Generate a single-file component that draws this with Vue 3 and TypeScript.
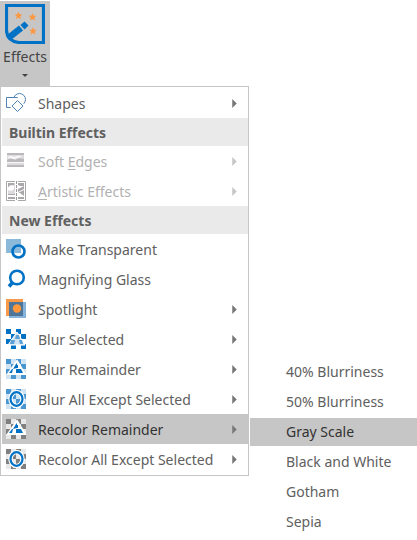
<script setup lang="ts">
import { ref } from 'vue'

interface Entry {
  id: string
  label: string
  accessKey?: string
  kind?: 'header'
  submenu?: boolean
  disabled?: boolean
}

const entries: Entry[] = [
  { id: 'shapes', label: 'Shapes', submenu: true },
  { id: 'builtin', label: 'Builtin Effects', kind: 'header' },
  { id: 'soft', label: 'Soft Edges', accessKey: 'E', submenu: true, disabled: true },
  { id: 'artistic', label: 'Artistic Effects', accessKey: 'A', submenu: true, disabled: true },
  { id: 'new', label: 'New Effects', kind: 'header' },
  { id: 'transparent', label: 'Make Transparent' },
  { id: 'magnify', label: 'Magnifying Glass' },
  { id: 'spotlight', label: 'Spotlight', submenu: true },
  { id: 'blur-selected', label: 'Blur Selected', submenu: true },
  { id: 'blur-remainder', label: 'Blur Remainder', submenu: true },
  { id: 'blur-all', label: 'Blur All Except Selected', submenu: true },
  { id: 'recolor-remainder', label: 'Recolor Remainder', submenu: true },
  { id: 'recolor-all', label: 'Recolor All Except Selected', submenu: true },
]

const options = ['40% Blurriness', '50% Blurriness', 'Gray Scale', 'Black and White', 'Gotham', 'Sepia']

const active = ref('recolor-remainder')
const option = ref('Gray Scale')

function parts(e: Entry): [string, string, string] {
  const i = e.accessKey ? e.label.indexOf(e.accessKey) : -1
  return i < 0 ? [e.label, '', ''] : [e.label.slice(0, i), e.label[i], e.label.slice(i + 1)]
}

const tiles: [number, number][] = [
  [0, 0], [10, 0], [5, 5], [15, 5], [0, 10], [10, 10], [5, 15], [15, 15],
]
function tileColor(id: string): string {
  if (id.startsWith('recolor')) return '#808080'
  return id === 'blur-selected' ? '#0072c6' : '#4a96d0'
}
function baseColor(id: string): string {
  if (id === 'blur-selected') return '#fff'
  return id.startsWith('recolor') ? '#e8e8e8' : '#cfe3f3'
}
function isMosaic(id: string): boolean {
  return id.startsWith('blur') || id.startsWith('recolor')
}
</script>

<template>
  <main class="app">
    <button class="effects" type="button" aria-haspopup="menu" aria-expanded="true">
      <svg class="effects-icon" viewBox="0 0 40 40" aria-hidden="true">
        <path d="M1.500 1.500H38.500V38.500H14Q1.500 37 1.500 26Z" fill="#c6c6c6" stroke="#0072c6" stroke-width="3.200" />
        <path d="M2 31L14 21.500L18 26.500L6 36Z" fill="#0072c6" />
        <path d="M15.500 21L19.500 17.500L23.500 21.500L19.500 25.500Z" fill="#0072c6" />
        <path
          v-for="(p, i) in [[13.5, 11.5], [27.5, 13], [28, 27]]"
          :key="i"
          :transform="`translate(${p[0]} ${p[1]})`"
          d="M0 -4L1.100 -1.200H4L1.700 .7L2.600 3.700L0 2L-2.600 3.700L-1.700 .7L-4 -1.200H-1.100Z"
          fill="#fd9840"
        />
      </svg>
      <span>Effects</span>
      <svg class="drop" viewBox="0 0 6 3" aria-hidden="true"><path d="M0 0H6L3 3Z" fill="#444" /></svg>
    </button>

    <div class="menus">
      <div class="menu" role="menu" aria-label="Effects">
        <template v-for="e in entries" :key="e.id">
          <h2 v-if="e.kind === 'header'" class="header">{{ e.label }}</h2>
          <button
            v-else
            class="row"
            :class="{ active: active === e.id }"
            type="button"
            role="menuitem"
            :disabled="e.disabled"
            @click="active = e.id"
          >
            <svg class="icon" viewBox="0 0 20 20" aria-hidden="true">
              <g v-if="e.id === 'shapes'" fill="#fff" stroke="#5083b5" stroke-width="1">
                <circle cx="13.500" cy="6.500" r="6" />
                <path d="M.5 4.500H11.500V14.500H.5Z" />
                <path d="M11.500 7.500L17 13L11.500 18.500L6 13Z" stroke="#fff" stroke-width="4" />
                <path d="M11.500 7.500L17 13L11.500 18.500L6 13Z" />
              </g>
              <g v-else-if="e.id === 'soft'">
                <rect x="1" y="2" width="17" height="14" fill="#dedbdf" />
                <path d="M1 2H18V4H1ZM1 9L5 7L9 9L12 7L18 8V11H1ZM1 14H18V16H1Z" fill="#bbb8bc" />
                <path d="M2 6Q5 4 8 6Q12 4 16 5L13 7L8 8L2 7ZM1 11H18V12H1Z" fill="#f8f7f8" />
              </g>
              <g v-else-if="e.id === 'artistic'">
                <path d="M.5 .5H19.500V19.500H.5Z" fill="#fff" stroke="#aaa7ab" />
                <path d="M2 2H9V18H2Z" fill="#dedbdf" />
                <path d="M2 2H8V4H4L2 6ZM2 13H9V14H2ZM2 16H9V18H2ZM12 2H18V5H14L12 4ZM12 8L18 5V8L12 11ZM12 12L18 9V15L14 12ZM12 16H18V18H12Z" fill="#aaa7ab" />
                <path d="M2 7Q5 3 8 5V8L5 10L2 9ZM2 14H9V16H2Z" fill="#fff" />
                <path d="M10.500 0V20" stroke="#fff" stroke-width="3" />
                <path d="M10.500 0V20" stroke="#999" stroke-dasharray="3 1" />
              </g>
              <g v-else-if="e.id === 'transparent'">
                <path d="M0 0H15V14H0Z" fill="#8ab9da" />
                <path d="M15 8V14H7A5.500 5.500 0 0 0 18 13A5 5 0 0 0 15 8Z" fill="#fff" />
                <circle cx="12.500" cy="12.500" r="6" fill="none" stroke="#0072c6" stroke-width="2.600" />
              </g>
              <g v-else-if="e.id === 'magnify'" fill="none" stroke="#0072c6">
                <circle cx="11" cy="8.500" r="6.800" stroke-width="2.600" />
                <path d="M6.500 13.500L3 17.500" stroke-width="3.500" />
              </g>
              <g v-else-if="e.id === 'spotlight'">
                <path d="M0 0H17V17H0Z" fill="#f99a4b" />
                <path d="M3 3H20V19H3Z" fill="#86b3d9" />
                <path d="M3 3H17V17H3Z" fill="#4f7598" />
                <circle cx="11" cy="9.500" r="4.200" fill="#ff983d" />
              </g>
              <g v-else-if="isMosaic(e.id)">
                <rect width="20" height="20" :fill="baseColor(e.id)" />
                <rect v-for="t in tiles" :key="t.join()" :x="t[0]" :y="t[1]" width="5" height="5" :fill="tileColor(e.id)" />
                <template v-if="e.id.endsWith('-all')">
                  <ellipse cx="10.500" cy="10" rx="6" ry="7" fill="none" stroke="#fff" stroke-width="4.500" />
                  <ellipse cx="10.500" cy="10" rx="6" ry="6.800" fill="none" stroke="#0072c6" stroke-width="2.200" />
                </template>
                <template v-else-if="e.id === 'blur-selected'">
                  <path d="M11 3L19 16H2Z" fill="#cfe3f3" stroke="#fff" stroke-width="1" />
                  <path d="M10 6H13L14 10H9ZM5 11H9L8 15H4ZM13 11H16L17 15H14Z" fill="#5c9fd3" />
                </template>
                <template v-else>
                  <path d="M11 2L19 15H2Z" fill="#fff" stroke="#fff" stroke-width="2" />
                  <path d="M10 5L11 4V9L7 10ZM6 10H10V14H3ZM13 10H15L17 14H13ZM11 6H12V9H11Z" fill="#0072c6" />
                  <path d="M7 10H10V14H6Z" fill="#fff" />
                  <path d="M10 10H13V14H10Z" fill="#0072c6" />
                </template>
              </g>
            </svg>
            <span class="label">{{ parts(e)[0] }}<u v-if="parts(e)[1]">{{ parts(e)[1] }}</u>{{ parts(e)[2] }}</span>
            <svg v-if="e.submenu" class="arrow" viewBox="0 0 4 8" aria-hidden="true"><path d="M0 0L4 4L0 8Z" fill="currentColor" /></svg>
          </button>
        </template>
      </div>

      <div class="submenu" role="menu" aria-label="Recolor Remainder">
        <button
          v-for="o in options"
          :key="o"
          class="option"
          :class="{ active: option === o }"
          type="button"
          role="menuitem"
          @click="option = o"
        >{{ o }}</button>
      </div>
    </div>
  </main>
</template>

<style>
body {
  background: #fff;
}
</style>

<style scoped>
.app {
  padding-top: 1px;
  font-family: "Noto Sans", "Open Sans", sans-serif;
  font-size: 14px;
  line-height: 20px;
  color: #606060;
}
button {
  font: inherit;
  color: inherit;
  border: 0;
  margin: 0;
  padding: 0;
  background: transparent;
  text-align: left;
}
.effects {
  display: flex;
  flex-direction: column;
  align-items: center;
  width: 50px;
  height: 85px;
  padding-top: 3px;
  background: #c6c6c6;
  color: #444;
}
.effects-icon {
  width: 40px;
  height: 40px;
  margin-bottom: 3px;
}
.drop {
  width: 6px;
  height: 3px;
  margin-top: 7px;
}
.menus {
  display: flex;
  align-items: flex-start;
}
.menu {
  box-sizing: border-box;
  width: 249px;
  flex: none;
  padding: 1px 0 1px 1px;
  border: 1px solid #c6c6c6;
  background: #fff;
}
.header {
  margin: 0;
  padding: 1px 7px 0;
  font-size: 14px;
  font-weight: 700;
  line-height: 27px;
  background: #eaeaea;
}
.row {
  display: flex;
  align-items: center;
  width: 100%;
  height: 30px;
  padding: 0 11px 0 4px;
}
.icon {
  flex: none;
  width: 20px;
  height: 20px;
  margin-right: 12px;
}
.label {
  flex: 1;
  padding-top: 1px;
  white-space: nowrap;
}
.label u {
  text-underline-offset: 2px;
}
.arrow {
  width: 5px;
  height: 9px;
  color: #777;
}
.row:disabled {
  color: #b1b1b1;
}
.row:disabled .arrow {
  color: #c6c6c6;
}
.active {
  background: #c6c6c6;
  color: #333;
}
.submenu {
  display: flex;
  flex: 1;
  flex-direction: column;
  gap: 2px;
  padding-top: 272px;
  margin-left: 1px;
}
.option {
  height: 28px;
  padding-left: 36px;
  white-space: nowrap;
}
</style>
